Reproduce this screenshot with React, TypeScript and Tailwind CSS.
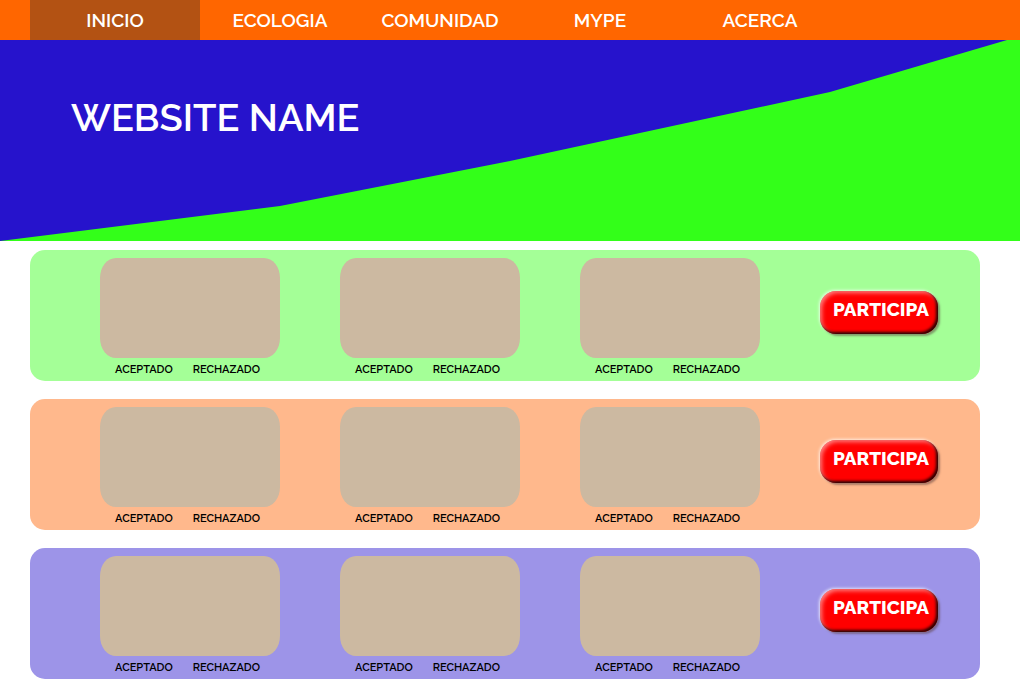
type Row = { id: string; panel: string; card: string };

const links = [
  { label: "INICIO", href: "#inicio", active: true },
  { label: "ECOLOGIA", href: "#ecologia", active: false },
  { label: "COMUNIDAD", href: "#comunidad", active: false },
  { label: "MYPE", href: "#mype", active: false },
  { label: "ACERCA", href: "#acerca", active: false },
];

const rows: Row[] = [
  { id: "ecologia", panel: "bg-[#a4ff97]", card: "bg-[#ccb9a1]" },
  { id: "comunidad", panel: "bg-[#ffb88c]", card: "bg-[#ccb9a1]" },
  { id: "mype", panel: "bg-[#9d94e8]", card: "bg-[#ccb9a1]" },
];

function NavBar() {
  return (
    <nav className="flex h-10 bg-[#ff6600] pl-[30px] text-[19px] leading-10 font-semibold text-white">
      {links.map((link) => (
        <a
          key={link.label}
          href={link.href}
          className={
            link.active
              ? "w-[170px] bg-[#b35213] text-center"
              : "w-40 text-center"
          }
        >
          {link.label}
        </a>
      ))}
    </nav>
  );
}

function Hero() {
  return (
    <header className="relative h-[201px] bg-[#33ff19]">
      <svg
        className="absolute inset-0 h-full w-full"
        viewBox="0 0 1020 201"
        preserveAspectRatio="none"
        aria-hidden="true"
      >
        <polygon
          points="0,0 1007,0 830,52 510,121 280,166 0,201"
          fill="#2613cc"
        />
      </svg>
      <h1 className="relative pt-[55px] pl-[71px] text-[38px] leading-[46px] font-semibold text-white">
        WEBSITE NAME
      </h1>
    </header>
  );
}

function Card({ color }: { color: string }) {
  return (
    <div className="w-[180px]">
      <div className={`h-[100px] rounded-[16px/20px] ${color}`} />
      <div className="flex justify-between pt-px pr-5 pl-[15px] text-[11px] leading-[22px] font-semibold text-black">
        <button type="button">ACEPTADO</button>
        <button type="button">RECHAZADO</button>
      </div>
    </div>
  );
}

function Panel({ row }: { row: Row }) {
  return (
    <section
      id={row.id}
      className={`flex gap-[60px] rounded-[15px] pt-2 pl-[70px] ${row.panel}`}
    >
      <Card color={row.card} />
      <Card color={row.card} />
      <Card color={row.card} />
      <button
        type="button"
        className="mt-[33px] h-[43px] w-[118px] rounded-2xl bg-[#ff0000] pb-2 pl-1 text-[19px] leading-5 font-extrabold text-white shadow-[inset_-2px_-2px_3px_rgba(0,0,0,0.85),inset_2px_2px_4px_rgba(255,255,255,0.5),2px_2px_2px_rgba(90,60,60,0.5),-1px_-1px_3px_rgba(255,255,255,0.7)]"
      >
        PARTICIPA
      </button>
    </section>
  );
}

export default function App() {
  return (
    <div className="min-h-screen bg-white font-[Raleway,Lato,sans-serif]">
      <NavBar />
      <Hero />
      <main className="flex flex-col gap-[18px] pt-[9px] pr-10 pb-5 pl-[30px]">
        {rows.map((row) => (
          <Panel key={row.id} row={row} />
        ))}
      </main>
    </div>
  );
}
